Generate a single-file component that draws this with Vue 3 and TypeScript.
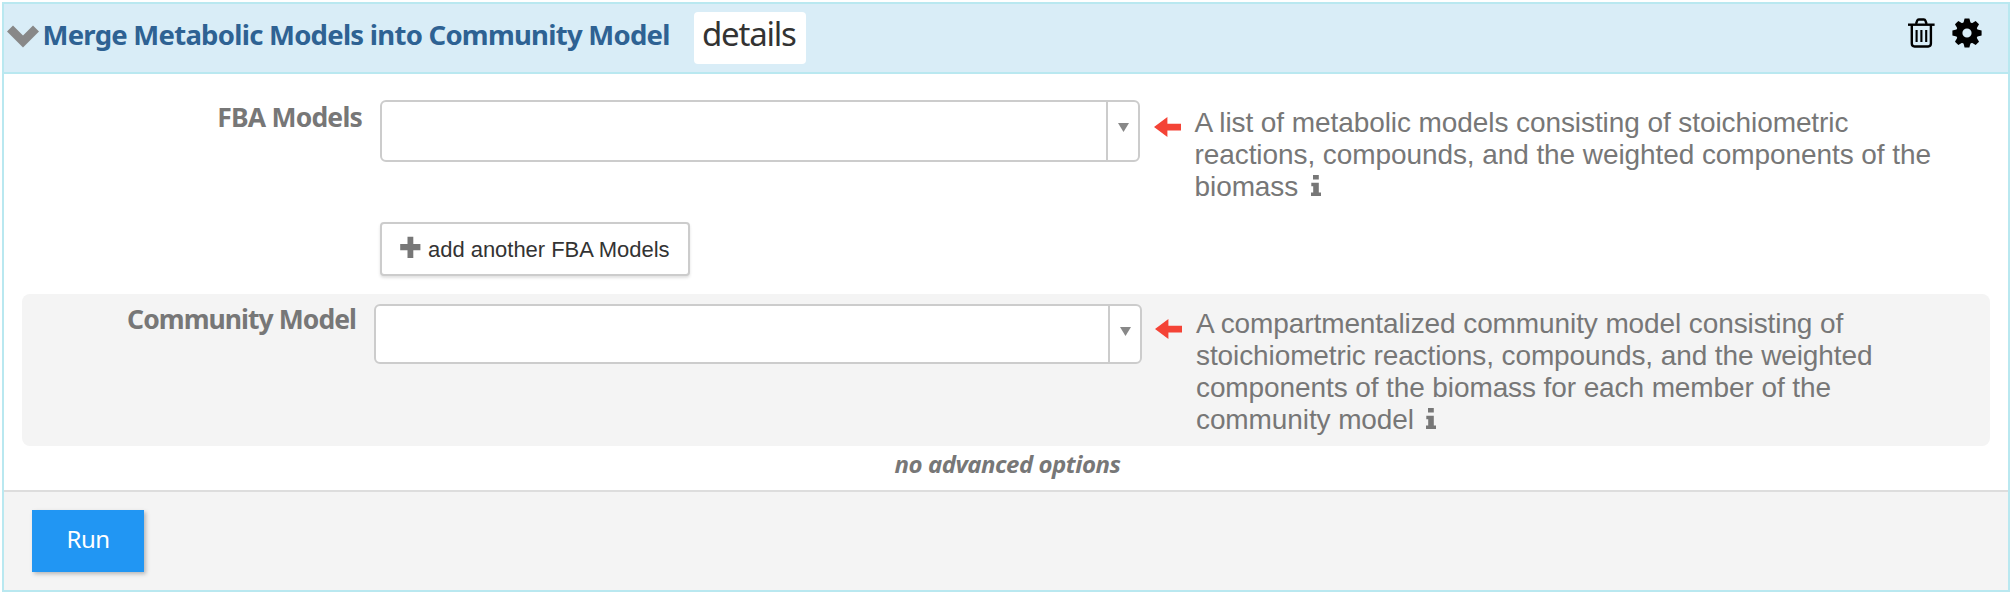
<script setup lang="ts">
interface Param {
  id: string
  label: string
  lines: string[]
  last: string
  addLabel?: string
}

const params: Param[] = [
  {
    id: 'fba',
    label: 'FBA Models',
    lines: [
      'A list of metabolic models consisting of stoichiometric',
      'reactions, compounds, and the weighted components of the',
    ],
    last: 'biomass',
    addLabel: 'add another FBA Models',
  },
  {
    id: 'community',
    label: 'Community Model',
    lines: [
      'A compartmentalized community model consisting of',
      'stoichiometric reactions, compounds, and the weighted',
      'components of the biomass for each member of the',
    ],
    last: 'community model',
  },
]
const teeth = [0, 45, 90, 135, 180, 225, 270, 315]
</script>

<template>
  <section class="panel">
    <header class="head">
      <svg class="chevron" viewBox="0 0 32 23" width="32" height="23">
        <path d="M0 6.5 6 .5 16 10.5 26 .5 32 6.5 16 22.5Z" fill="#888" />
      </svg>
      <h1 class="title">Merge Metabolic Models into Community Model</h1>
      <button class="details" type="button">details</button>
      <div class="tools">
        <svg class="trash" viewBox="0 0 27 30" width="27" height="30">
          <g fill="none" stroke="#000" stroke-width="2.4">
            <path d="M0 6.7H26.6" />
            <path d="M8 6 9.2 2.6Q9.6 1.5 10.8 1.5H15.8Q17 1.5 17.4 2.6L18.6 6" />
            <path d="M3.8 7V25.6Q3.8 28.5 6.5 28.5H20.2Q22.9 28.5 22.9 25.6V7" />
            <path d="M8.6 12V24M13.4 12V24M18.2 12V24" stroke-width="2.1" />
          </g>
        </svg>
        <svg class="gear" viewBox="-15 -15 30 30" width="30" height="30">
          <path
            d="M0-10.9A10.9 10.9 0 1 1 0 10.9 10.9 10.9 0 1 1 0-10.9ZM0-4.6A4.6 4.6 0 1 0 0 4.6 4.6 4.6 0 1 0 0-4.6Z"
            fill-rule="evenodd"
          />
          <path
            v-for="a in teeth"
            :key="a"
            d="M-3.7-9.5-2.4-14.6H2.4L3.7-9.5Z"
            :transform="`rotate(${a})`"
          />
        </svg>
      </div>
    </header>

    <div class="body">
      <div v-for="p in params" :key="p.id" class="row" :class="p.id">
        <label class="label">{{ p.label }}</label>
        <div class="field">
          <div class="select">
            <span class="value"></span>
            <span class="drop">
              <svg viewBox="0 0 11 9" width="11" height="9"><path d="M0 0H11L5.5 9Z" fill="#888" /></svg>
            </span>
          </div>
          <button v-if="p.addLabel" class="add" type="button">
            <svg viewBox="0 0 21 22" width="21" height="22">
              <path d="M7.5 .8H13.3V8H20.4V14.3H13.3V22H7.5V14.3H.2V8H7.5Z" fill="#777" />
            </svg>
            <span>{{ p.addLabel }}</span>
          </button>
        </div>
        <svg class="arrow" viewBox="0 0 27 20" width="27" height="20">
          <path d="M0 10 13.4 0V6.7H27V13.5H13.4V20Z" fill="#f44336" />
        </svg>
        <p class="desc">
          <span v-for="line in p.lines" :key="line" class="line">{{ line }}</span>
          <span class="line">{{ p.last }}<svg class="info" viewBox="0 0 10 21" width="10" height="21">
            <path d="M2 0H7.8V4.6H2ZM.3 7.8H7.8V17.6H10V21H0V17.6H2.2V11.2H.3Z" fill="#777" />
          </svg></span>
        </p>
      </div>
      <p class="advanced">no advanced options</p>
    </div>

    <footer class="foot">
      <button class="run" type="button">Run</button>
    </footer>
  </section>
</template>

<style>
html,
body {
  margin: 0;
  background: #fff;
}
</style>

<style scoped>
* {
  box-sizing: border-box;
}
h1,
p {
  margin: 0;
}
button {
  font: inherit;
  margin: 0;
  border: 0;
}
svg {
  display: block;
  flex: none;
}
.panel {
  width: 2008px;
  height: 590px;
  margin: 2px 0 0 2px;
  border: 2px solid #b9e8f0;
  background: #fff;
  color: #777;
  display: flex;
  flex-direction: column;
  font-family: "Noto Sans", "Open Sans", sans-serif;
}
.head {
  flex: none;
  height: 70px;
  background: #d9edf7;
  border-bottom: 2px solid #b9e8f0;
  display: flex;
  align-items: flex-start;
  padding-left: 3px;
}
.chevron {
  margin-top: 21px;
}
.title {
  width: 648px;
  margin: 11px 0 0 3.5px;
  font-size: 27.5px;
  line-height: 40px;
  font-weight: 700;
  letter-spacing: -0.745px;
  color: #2e6293;
  white-space: nowrap;
}
.details {
  width: 112px;
  height: 52px;
  margin: 8px 0 0 3.5px;
  padding: 1px 0 9px 8px;
  border-radius: 4px;
  background: #fff;
  color: #333;
  font-size: 33px;
  line-height: 42px;
  letter-spacing: -1.22px;
  text-align: left;
}
.tools {
  margin-left: auto;
  display: flex;
  gap: 17px;
  padding: 14px 26px 0 0;
}
.body {
  flex: none;
  height: 416px;
}
.row {
  display: flex;
  align-items: flex-start;
}
.fba {
  height: 220px;
  padding: 26px 0 0 18px;
}
.community {
  height: 152px;
  margin: 0 18px;
  padding-top: 10px;
  background: #f4f4f4;
  border-radius: 8px;
}
.label {
  width: 340px;
  margin: 1px 18px 0 0;
  text-align: right;
  font-size: 26.5px;
  line-height: 32px;
  font-weight: 700;
  letter-spacing: -0.8px;
  white-space: nowrap;
}
.community .label {
  width: 334px;
  margin-top: -1px;
  letter-spacing: -0.95px;
}
.field {
  width: 760px;
}
.community .field {
  width: 768px;
}
.select {
  height: 62px;
  border: 2px solid #ccc;
  border-radius: 6px;
  background: #fff;
  display: flex;
}
.community .select {
  height: 60px;
}
.value {
  flex: 1;
}
.drop {
  width: 32px;
  border-left: 2px solid #ccc;
  padding: 21px 0 0 10px;
}
.add {
  margin-top: 60px;
  width: 310px;
  height: 54px;
  padding: 0 0 0 18px;
  border: 2px solid #ccc;
  border-radius: 4px;
  background: #fff;
  box-shadow: 0 2px 3px rgba(0, 0, 0, 0.12);
  color: #333;
  display: flex;
  align-items: flex-start;
  gap: 7px;
  font-family: "Liberation Sans", Arial, sans-serif;
  font-size: 22px;
  line-height: 30px;
  letter-spacing: -0.03px;
  white-space: nowrap;
}
.add svg {
  margin-top: 12px;
}
.add span {
  margin-top: 11px;
}
.arrow {
  margin: 17px 0 0 13.5px;
}
.community .arrow {
  margin: 15px 0 0 13px;
}
.desc {
  margin: 6.5px 0 0 14px;
  font-family: "Liberation Sans", Arial, sans-serif;
  font-size: 28px;
  line-height: 32px;
  letter-spacing: -0.08px;
  white-space: nowrap;
}
.community .desc {
  margin-top: 4px;
  letter-spacing: -0.1px;
}
.line {
  display: block;
}
.info {
  display: inline-block;
  margin-left: 12.5px;
  vertical-align: baseline;
}
.advanced {
  padding: 1px 0 0 3px;
  text-align: center;
  font-size: 24px;
  line-height: 34px;
  font-weight: 700;
  font-style: italic;
  letter-spacing: -0.48px;
}
.foot {
  flex: 1;
  border-top: 2px solid #ddd;
  background: #f4f4f4;
  padding: 18px 0 0 28px;
}
.run {
  display: block;
  width: 112px;
  height: 62px;
  padding: 0 0 4px;
  background: #2196f3;
  color: #fff;
  font-size: 24px;
  line-height: 58px;
  letter-spacing: -0.5px;
  box-shadow: 2px 2px 4px rgba(0, 0, 0, 0.25);
}
</style>
